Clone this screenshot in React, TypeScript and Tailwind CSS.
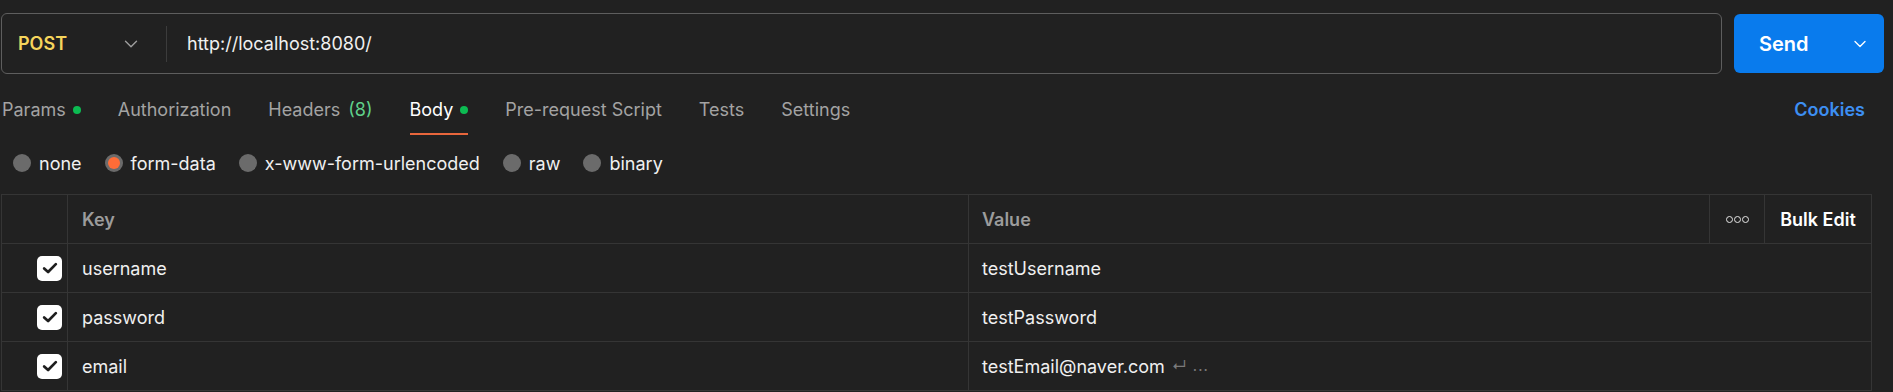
import { ChevronDown } from "lucide-react";

const tabs = [
  { label: "Params", dot: true },
  { label: "Authorization" },
  { label: "Headers", count: "(8)" },
  { label: "Body", dot: true, active: true },
  { label: "Pre-request Script" },
  { label: "Tests" },
  { label: "Settings" },
];

const bodyTypes = [
  { label: "none" },
  { label: "form-data", checked: true },
  { label: "x-www-form-urlencoded" },
  { label: "raw" },
  { label: "binary" },
];

const rows = [
  { key: "username", value: "testUsername" },
  { key: "password", value: "testPassword" },
  { key: "email", value: "testEmail@naver.com", more: true },
];

function Checkbox() {
  return (
    <div className="w-[25px] h-[25px] rounded-[5px] bg-white flex items-center justify-center">
      <svg width="18" height="18" viewBox="0 0 16 16" fill="none">
        <path d="M2.8 8.4 L6.3 11.6 L13.2 4.6" stroke="#1e1e1e" strokeWidth="2.4" strokeLinecap="round" strokeLinejoin="round" />
      </svg>
    </div>
  );
}

export default function App() {
  return (
    <div className="h-[392px] w-full bg-[#212121] overflow-hidden font-['Inter',sans-serif] text-[18px]">
      {/* url bar */}
      <div className="flex pt-[13px] pl-[1px] pr-[9px] gap-[12px]">
        <div className="flex-1 h-[61px] border border-[#5e5e5e] rounded-[6px] flex items-center">
          <div className="w-[165px] h-[36px] flex items-center justify-between pl-[16px] pr-[24px] border-r border-[#3c3c3c]">
            <span className="font-semibold text-[#f6d55c]">POST</span>
            <ChevronDown size={22} strokeWidth={1.5} className="text-[#9e9e9e]" />
          </div>
          <span className="pl-[20px] text-[#f0f0f0]">http://localhost:8080/</span>
        </div>
        <div className="w-[150px] h-[59px] mt-[1px] bg-[#097bed] rounded-[6px] flex items-center justify-between pl-[25px] pr-[14px]">
          <span className="text-[20px] font-semibold text-white">Send</span>
          <ChevronDown size={20} strokeWidth={1.6} className="text-white" />
        </div>
      </div>

      {/* tabs */}
      <div className="flex items-start justify-between mt-[24px] pl-[2px] pr-[28px]">
        <div className="flex gap-[37px]">
          {tabs.map((t) => (
            <div key={t.label} className="flex flex-col">
              <div className={`flex items-center h-[24px] leading-[24px] ${t.active ? "text-white" : "text-[#a3a3a3]"}`}>
                <span>{t.label}</span>
                {t.count && <span className="ml-[8px] text-[#5fd08a]">{t.count}</span>}
                {t.dot && <span className="ml-[7px] w-[8px] h-[8px] rounded-full bg-[#0cbb52]" />}
              </div>
              <div className={`mt-[11px] h-[2px] ${t.active ? "bg-[#e8663c]" : "bg-transparent"}`} />
            </div>
          ))}
        </div>
        <span className="h-[24px] leading-[24px] font-semibold text-[#3d8ff2]">Cookies</span>
      </div>

      {/* body type radios */}
      <div className="flex items-center gap-[23px] mt-[16px] pl-[13px] h-[24px]">
        {bodyTypes.map((b) => (
          <div key={b.label} className="flex items-center gap-[8px]">
            {b.checked ? (
              <span className="w-[18px] h-[18px] rounded-full bg-[#6b6b6b] flex items-center justify-center">
                <span className="w-[12px] h-[12px] rounded-full bg-[#ff6c37]" />
              </span>
            ) : (
              <span className="w-[18px] h-[18px] rounded-full bg-[#6b6b6b]" />
            )}
            <span className="text-[#f0f0f0]">{b.label}</span>
          </div>
        ))}
      </div>

      {/* table */}
      <div className="mt-[19px] ml-[1px] w-[1871px] border-t border-l border-r border-[#353535]">
        <div className="flex h-[49px] border-b border-[#353535]">
          <div className="w-[66px] border-r border-[#353535]" />
          <div className="w-[901px] border-r border-[#353535] flex items-center pl-[14px] font-semibold text-[#9c9c9c]">Key</div>
          <div className="flex-1 border-r border-[#353535] flex items-center pl-[13px] font-semibold text-[#9c9c9c]">Value</div>
          <div className="w-[55px] border-r border-[#353535] flex items-center justify-center gap-[1px]">
            {[0, 1, 2].map((i) => (
              <span key={i} className="w-[7px] h-[7px] rounded-full border-[1.5px] border-[#e6e6e6]" />
            ))}
          </div>
          <div className="w-[106px] flex items-center justify-center font-semibold text-white">Bulk Edit</div>
        </div>
        {rows.map((r) => (
          <div key={r.key} className="flex h-[49px] border-b border-[#353535]">
            <div className="w-[66px] border-r border-[#353535] flex items-center pl-[35px]">
              <Checkbox />
            </div>
            <div className="w-[901px] border-r border-[#353535] flex items-center pl-[14px] text-[#f0f0f0]">{r.key}</div>
            <div className="flex-1 flex items-center pl-[13px] text-[#f0f0f0]">
              <span>{r.value}</span>
              {r.more && (
                <span className="ml-[7px] text-[15px] text-[#7a7a7a] tracking-[1px]">↵ ...</span>
              )}
            </div>
          </div>
        ))}
      </div>
    </div>
  );
}
